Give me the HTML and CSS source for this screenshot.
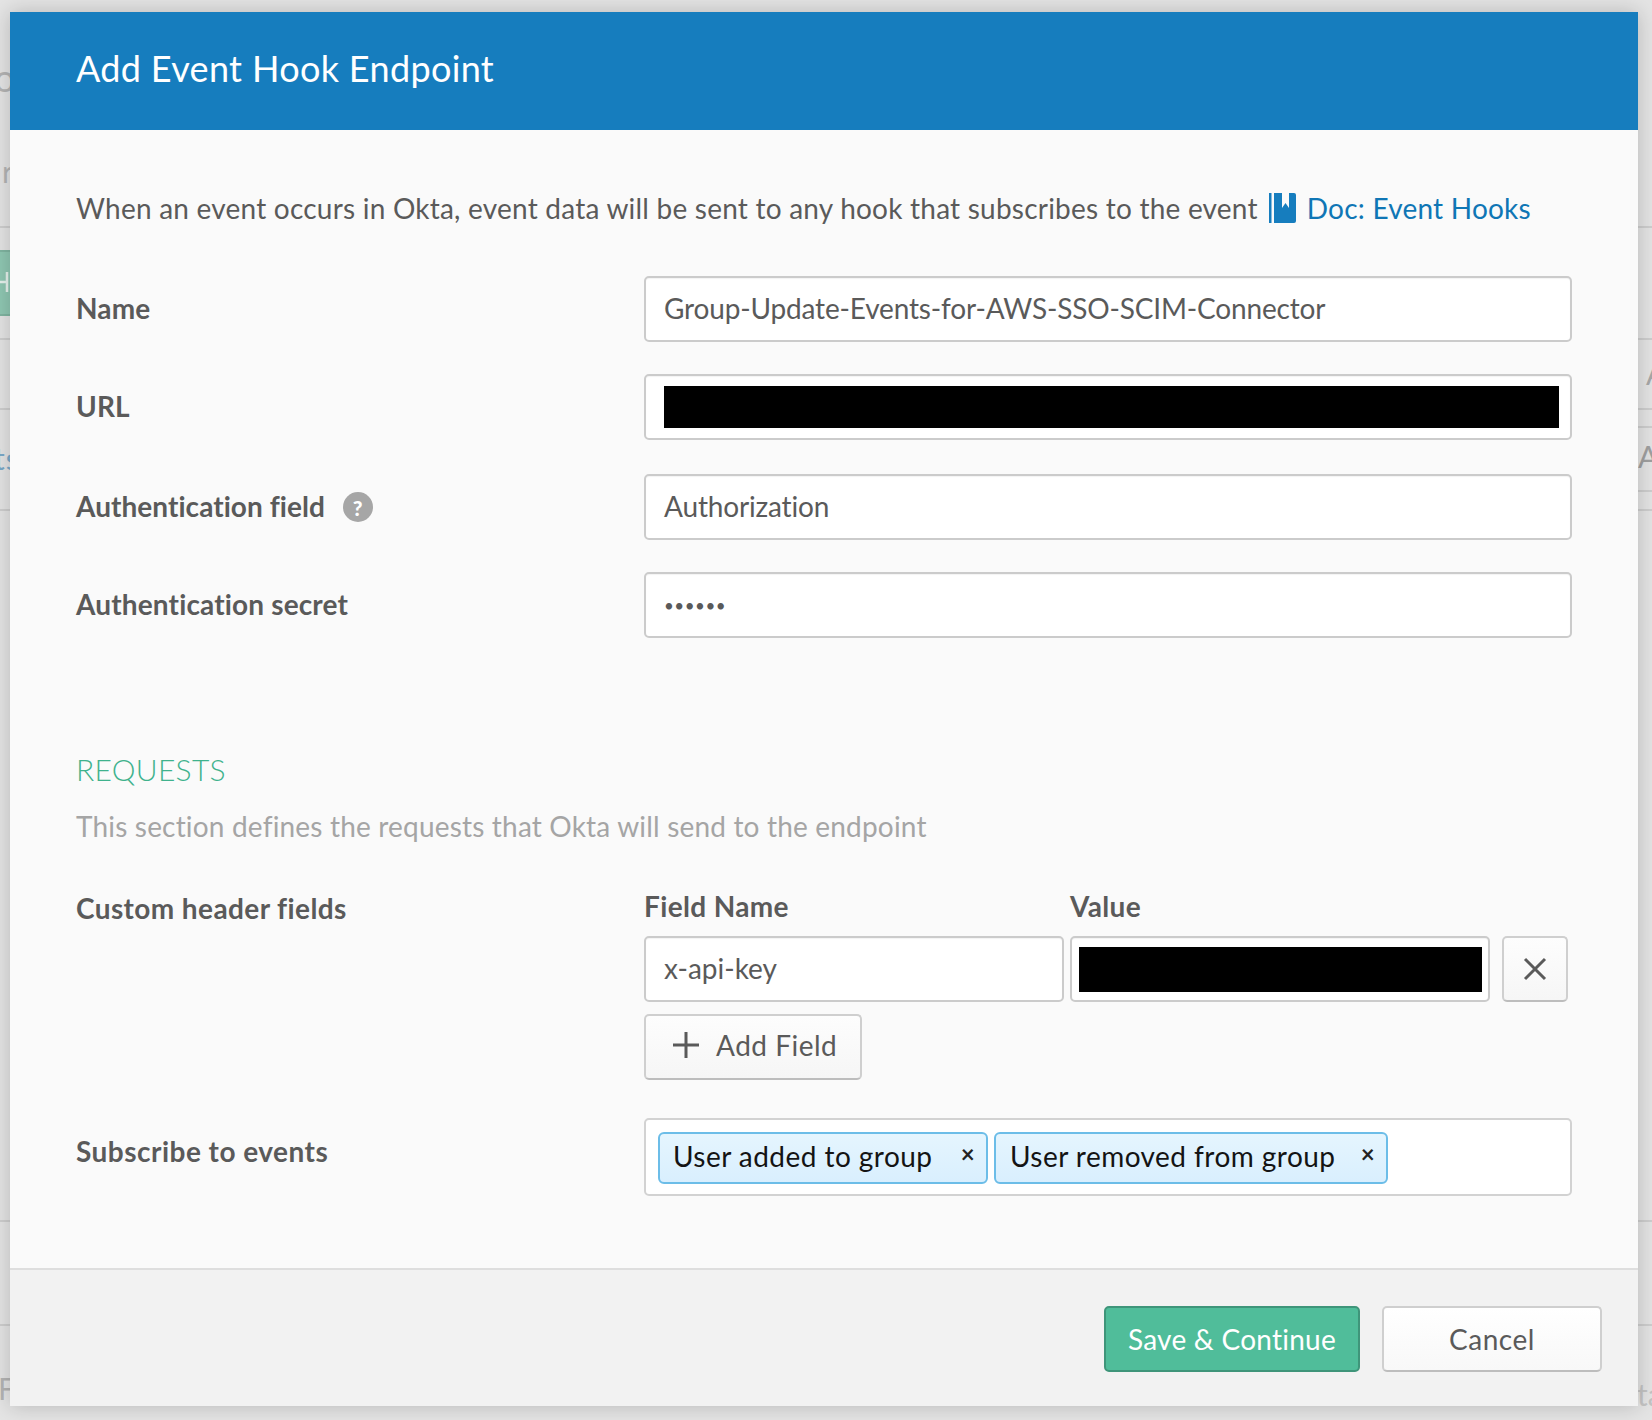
FILE: index.html
```html
<!DOCTYPE html>
<html lang="en">
<head>
<meta charset="utf-8">
<title>Add Event Hook Endpoint</title>
<link rel="stylesheet" href="styles.css">
</head>
<body>
<div class="backdrop">
  <span class="ghost g-o">o</span>
  <span class="ghost g-r">r</span>
  <span class="ghost-btn"><svg class="ghost-plus" viewBox="0 0 10 24" aria-hidden="true"><path d="M0 12h8M7 2v20"/></svg></span>
  <span class="ghost g-ts">ts</span>
  <span class="ghost g-f">F</span>
  <span class="ghost g-a1">A</span>
  <span class="ghost g-a2">A</span>
  <span class="ghost g-ta">ta</span>
  <i class="line l1"></i><i class="line l2"></i><i class="line l3"></i><i class="line l4"></i><i class="line l5"></i><i class="line l6"></i>
  <i class="line r0"></i><i class="line r1"></i><i class="line r2"></i><i class="line r3"></i><i class="line r4"></i><i class="line r5"></i><i class="line r6"></i><i class="line r7"></i>
</div>
<main class="modal">
  <header class="modal-header"><h1>Add Event Hook Endpoint</h1></header>
  <section class="modal-body">
    <p class="intro">When an event occurs in Okta, event data will be sent to any hook that subscribes to the event
      <a class="doc-link" href="#"><svg class="book" viewBox="0 0 27 30" aria-hidden="true"><path d="M0 0h2.500v30H0z"/><path fill-rule="evenodd" d="M5 0h20a2 2 0 0 1 2 2v26a2 2 0 0 1-2 2H5zM13 0v15l3.500-5 3.500 5V0z"/></svg>Doc: Event Hooks</a></p>

    <div class="row first">
      <label class="label">Name</label>
      <div class="input tight">Group-Update-Events-for-AWS-SSO-SCIM-Connector</div>
    </div>
    <div class="row">
      <label class="label">URL</label>
      <div class="input redacted-wrap"><span class="redact url-redact"></span></div>
    </div>
    <div class="row wide-gap">
      <label class="label label-auth">Authentication field <span class="help">?</span></label>
      <div class="input tight">Authorization</div>
    </div>
    <div class="row">
      <label class="label">Authentication secret</label>
      <div class="input dots">••••••</div>
    </div>

    <h2 class="section-title">REQUESTS</h2>
    <p class="section-desc">This section defines the requests that Okta will send to the endpoint</p>

    <div class="row custom">
      <label class="label custom-label">Custom header fields</label>
      <div class="fields">
        <div class="col-head">Field Name</div>
        <div class="col-head">Value</div>
        <div></div>
        <div class="input">x-api-key</div>
        <div class="input value-wrap"><span class="redact value-redact"></span></div>
        <button class="btn icon-btn" type="button" aria-label="Remove"><svg viewBox="0 0 24 24" class="x-icon"><path d="M2 2l20 20M22 2L2 22"/></svg></button>
        <button class="btn add-btn" type="button"><svg viewBox="0 0 28 28" class="plus-icon"><path d="M14 1v26M1 14h26"/></svg><span class="add-text">Add Field</span></button>
      </div>
    </div>

    <div class="row events">
      <label class="label">Subscribe to events</label>
      <div class="chips">
        <span class="chip chip-a">User added to group<span class="chip-x">×</span></span>
        <span class="chip chip-b">User removed from group<span class="chip-x">×</span></span>
      </div>
    </div>
  </section>
  <footer class="modal-footer">
    <button class="btn save" type="button">Save &amp; Continue</button>
    <button class="btn cancel" type="button">Cancel</button>
  </footer>
</main>
</body>
</html>
```

FILE: styles.css
```css
* { box-sizing: border-box; }
html, body { margin: 0; height: 100%; }
body {
  background: #e4e4e4;
  font-family: "Lato", "Open Sans", sans-serif;
  font-variant-ligatures: none;
  color: #5a5a5a;
  overflow: hidden;
  padding-top: 12px;
  position: relative;
}
.backdrop { position: absolute; inset: 0; overflow: hidden; background: #e4e4e4; }
.ghost { position: absolute; color: #b4b4b4; font-size: 30px; line-height: 30px; }
.g-o { left: -6px; top: 62px; font-size: 38px; }
.g-r { left: 2px; top: 156px; }
.g-ts { left: -6px; top: 443px; color: #7aa9c8; letter-spacing: 1px; }
.g-f { left: -2px; top: 1373px; }
.g-a1 { left: 1646px; top: 358px; color: #a8a8a8; }
.g-a2 { left: 1638px; top: 441px; color: #a0a0a0; }
.g-ta { left: 1637px; top: 1379px; color: #c4c4c4; }
.ghost-btn { position: absolute; left: 0; top: 250px; width: 12px; height: 66px; background: #8fc7b2; border-top: 2px solid #80b5a1; border-bottom: 2px solid #80b5a1; }
.ghost-plus { position: absolute; left: 0; top: 18px; width: 10px; height: 24px; stroke: #e6f2ed; stroke-width: 2.500; fill: none; }
.line { position: absolute; height: 2px; background: #cecece; }
.l1, .l2, .l3, .l4, .l5, .l6 { left: 0; width: 12px; }
.r0, .r1, .r2, .r3, .r4, .r5, .r6, .r7 { left: 1638px; width: 14px; }
.l1 { top: 226px; } .l2 { top: 338px; } .l3 { top: 408px; } .l4 { top: 509px; } .l5 { top: 1220px; } .l6 { top: 1324px; }
.r0 { top: 226px; } .r1 { top: 338px; } .r2 { top: 408px; } .r3 { top: 426px; } .r4 { top: 490px; } .r5 { top: 509px; } .r6 { top: 1220px; } .r7 { top: 1324px; }

.modal {
  position: relative;
  width: 1628px;
  margin-left: 10px;
  background: #fafafa;
  box-shadow: 0 0 20px rgba(0, 0, 0, .2);
}
.modal-header { height: 118px; background: #167dbe; padding: 0 0 6px 66px; display: flex; align-items: center; }
.modal-header h1 { margin: 0; color: #fff; font-size: 36px; font-weight: 400; letter-spacing: .34px; }
.modal-body { padding: 0 66px; height: 1138px; }
.intro {
  margin: 0;
  height: 146px;
  padding-top: 10px;
  font-size: 28px;
  line-height: 42px;
  letter-spacing: .22px;
  white-space: nowrap;
  display: flex;
  align-items: center;
}
.doc-link { color: #0f76b5; text-decoration: none; display: inline-flex; align-items: center; margin-left: 11px; }
.book { width: 27px; height: 30px; fill: #167dbe; margin-right: 11px; }
.row { display: grid; grid-template-columns: 568px 928px; align-items: center; margin-top: 32px; }
.row.first { margin-top: 0; }
.row.wide-gap { margin-top: 34px; }
.label { font-size: 28px; font-weight: 700; color: #5a5a5a; display: flex; align-items: center; letter-spacing: .15px; padding-bottom: 3px; white-space: pre; }
.label-auth { letter-spacing: .05px; }
.help {
  width: 30px; height: 30px; border-radius: 50%;
  background: #a6a6a6; color: #fff;
  font-size: 21px; font-weight: 900;
  display: inline-flex; align-items: center; justify-content: center;
  margin: 3px 0 0 11px;
}
.input {
  height: 66px;
  background: #fff;
  border: 2px solid #cbcbcb;
  border-radius: 5px;
  box-shadow: inset 0 1px 1px rgba(0, 0, 0, .05);
  padding-left: 18px;
  font-size: 28px;
  line-height: 60px;
  color: #5a5a5a;
  white-space: nowrap;
}
.tight { letter-spacing: -.16px; }
.redacted-wrap { display: flex; align-items: center; }
.redact { display: block; background: #000; }
.url-redact { width: 895px; height: 42px; }
.dots { font-size: 17px; letter-spacing: .5px; line-height: 64px; }
.section-title { margin: 0; padding-top: 111px; font-size: 30px; line-height: 40px; font-weight: 300; letter-spacing: .3px; color: #3fb28d; }
.section-desc { margin: 0; padding-top: 17px; font-size: 28px; line-height: 40px; color: #a5a5a5; letter-spacing: .18px; }
.row.custom { margin-top: 42px; align-items: start; }
.custom-label { margin-top: 2px; line-height: 36px; padding-bottom: 0; letter-spacing: .4px; }
.fields { display: grid; grid-template-columns: 420px 420px 66px; column-gap: 6px; row-gap: 12px; }
.col-head { font-size: 28px; font-weight: 700; line-height: 36px; color: #5a5a5a; letter-spacing: .35px; }
.fields .icon-btn { margin-left: 6px; }
.value-wrap { padding-left: 7px; display: flex; align-items: center; }
.value-redact { width: 403px; height: 45px; }
.btn {
  font-family: inherit; font-size: 28px; color: #5a5a5a; letter-spacing: .25px;
  background: linear-gradient(#fdfdfd, #f6f6f6);
  border: 2px solid #cfcfcf; border-bottom-color: #bdbdbd;
  border-radius: 5px; height: 66px; padding: 0; cursor: pointer;
}
.icon-btn { width: 66px; display: flex; align-items: center; justify-content: center; }
.x-icon { width: 24px; height: 24px; stroke: #5a5a5a; stroke-width: 3; fill: none; }
.add-btn { grid-column: 1; width: 218px; display: flex; align-items: center; padding: 0 0 4px 26px; letter-spacing: .5px; }
.plus-icon { width: 28px; height: 28px; stroke: #5a5a5a; stroke-width: 3; fill: none; margin-right: 16px; }
.add-text { display: block; }
.row.events { margin-top: 38px; align-items: start; }
.row.events .label { margin-top: 15px; line-height: 36px; padding-bottom: 0; letter-spacing: .48px; }
.chips {
  height: 78px; background: #fff; border: 2px solid #d2d2d2; border-radius: 5px;
  display: flex; align-items: flex-start; gap: 6px; padding: 12px 0 0 12px;
}
.chip {
  height: 52px; border: 2px solid #6cbde8; border-radius: 6px;
  background: linear-gradient(#e5f5fe, #d9effe);
  color: #141414; font-size: 28px; line-height: 44px; letter-spacing: .45px;
  padding-left: 13px; position: relative; white-space: nowrap;
}
.chip-a { width: 330px; }
.chip-b { width: 394px; padding-left: 14px; }
.chip-x { position: absolute; right: 11px; top: 0; font-size: 24px; font-weight: 700; line-height: 40px; color: #222; }
.modal-footer {
  height: 138px; background: #f2f2f2; border-top: 2px solid #dedede;
  display: flex; justify-content: flex-end; gap: 22px;
  padding: 36px 36px 0 0;
}
.save { width: 256px; background: #50bd9a; border-color: #3f957a; color: #fff; }
.cancel { width: 220px; background: linear-gradient(#fff, #f8f8f8); letter-spacing: .55px; }
```
